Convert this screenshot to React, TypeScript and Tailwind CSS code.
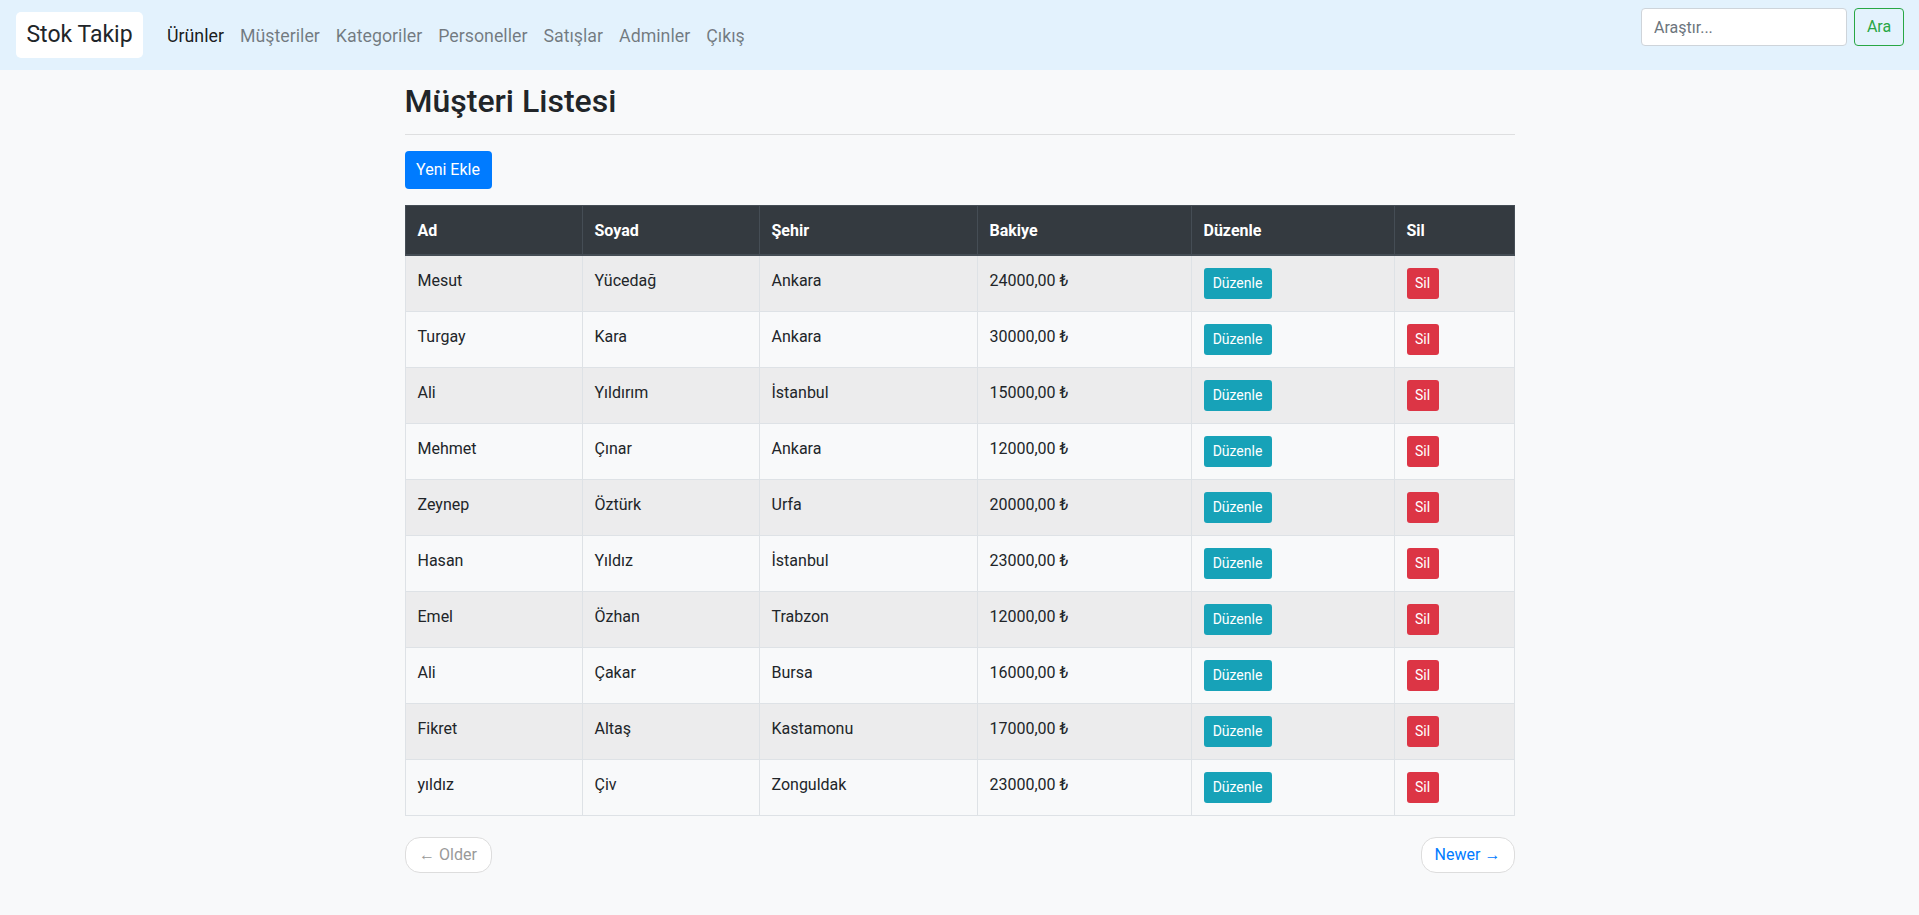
import React from "react";

interface Customer {
  ad: string;
  soyad: string;
  sehir: string;
  bakiye: string;
}

const customers: Customer[] = [
  { ad: "Mesut", soyad: "Yücedağ", sehir: "Ankara", bakiye: "24000,00 ₺" },
  { ad: "Turgay", soyad: "Kara", sehir: "Ankara", bakiye: "30000,00 ₺" },
  { ad: "Ali", soyad: "Yıldırım", sehir: "İstanbul", bakiye: "15000,00 ₺" },
  { ad: "Mehmet", soyad: "Çınar", sehir: "Ankara", bakiye: "12000,00 ₺" },
  { ad: "Zeynep", soyad: "Öztürk", sehir: "Urfa", bakiye: "20000,00 ₺" },
  { ad: "Hasan", soyad: "Yıldız", sehir: "İstanbul", bakiye: "23000,00 ₺" },
  { ad: "Emel", soyad: "Özhan", sehir: "Trabzon", bakiye: "12000,00 ₺" },
  { ad: "Ali", soyad: "Çakar", sehir: "Bursa", bakiye: "16000,00 ₺" },
  { ad: "Fikret", soyad: "Altaş", sehir: "Kastamonu", bakiye: "17000,00 ₺" },
  { ad: "yıldız", soyad: "Çiv", sehir: "Zonguldak", bakiye: "23000,00 ₺" },
];

const navLinks = ["Ürünler", "Müşteriler", "Kategoriler", "Personeller", "Satışlar", "Adminler", "Çıkış"];

const Navbar = () => (
  <nav className="flex h-[70px] items-center bg-[#e3f2fd] pl-4 pr-[15px]">
    <a className="flex h-[46px] w-[127px] items-center justify-center rounded-[5px] bg-white text-[23px] text-[#212529]">
      Stok Takip
    </a>
    <ul className="ml-4 flex items-center pt-[2px]">
      {navLinks.map((link, index) => (
        <li key={link}>
          <a
            className={
              index === 0
                ? "block px-2 text-[17.8px] leading-[26px] text-black/90"
                : "block px-2 text-[17.8px] leading-[26px] text-black/50"
            }
          >
            {link}
          </a>
        </li>
      ))}
    </ul>
    <form className="ml-auto flex gap-[7px] self-start pt-2">
      <input
        className="h-[38px] w-[206px] rounded-[4px] border border-[#ced4da] bg-white px-3 text-base text-[#495057] placeholder:text-[#6c757d]"
        placeholder="Araştır..."
      />
      <button
        className="h-[38px] w-[50px] rounded-[4px] border border-[#28a745] text-base text-[#28a745]"
        type="button"
      >
        Ara
      </button>
    </form>
  </nav>
);

const textCell = "border border-[#dee2e6] px-3 pt-[13px] pb-[11px] align-top leading-6";
const buttonCell = "border border-[#dee2e6] px-3 py-3 align-top leading-6";
const headCell = "border border-b-2 border-[#454d55] px-3 pt-[13px] pb-[11px] leading-6 font-bold";

const CustomerTable = () => (
  <table className="w-full table-fixed border-collapse text-base text-[#212529]">
    <thead>
      <tr className="bg-[#343a40] text-left text-white">
        <th className={`w-[177px] ${headCell}`}>Ad</th>
        <th className={`w-[177px] ${headCell}`}>Soyad</th>
        <th className={`w-[218px] ${headCell}`}>Şehir</th>
        <th className={`w-[214px] ${headCell}`}>Bakiye</th>
        <th className={`w-[203px] ${headCell}`}>Düzenle</th>
        <th className={headCell}>Sil</th>
      </tr>
    </thead>
    <tbody>
      {customers.map((customer, index) => (
        <tr className={index % 2 === 0 ? "bg-[#ececed]" : ""} key={`${customer.ad}-${index}`}>
          <td className={textCell}>{customer.ad}</td>
          <td className={textCell}>{customer.soyad}</td>
          <td className={textCell}>{customer.sehir}</td>
          <td className={textCell}>{customer.bakiye}</td>
          <td className={buttonCell}>
            <button
              className="block h-[31px] w-[68px] rounded-[3px] bg-[#17a2b8] text-center text-sm leading-[31px] text-white"
              type="button"
            >
              Düzenle
            </button>
          </td>
          <td className={buttonCell}>
            <button
              className="block h-[31px] w-[32px] rounded-[3px] bg-[#dc3545] text-center text-sm leading-[31px] text-white"
              type="button"
            >
              Sil
            </button>
          </td>
        </tr>
      ))}
    </tbody>
  </table>
);

export default function App() {
  return (
    <div className="min-h-screen bg-[#f8f9fa] font-['Roboto',sans-serif] text-[#212529]">
      <Navbar />
      <main className="mx-auto w-[1110px] pt-3">
        <h2 className="text-[32px] leading-[38px] font-medium">Müşteri Listesi</h2>
        <hr className="mt-[14px] mb-4 border-t border-black/10" />
        <button
          className="h-[38px] w-[87px] rounded-[4px] bg-[#007bff] text-base text-white"
          type="button"
        >
          Yeni Ekle
        </button>
        <div className="mt-4">
          <CustomerTable />
        </div>
        <div className="mt-[21px] flex justify-between">
          <a className="flex h-[36px] w-[87px] items-center justify-center rounded-[15px] border border-[#dddddd] bg-white text-base text-[#999999]">
            ← Older
          </a>
          <a className="flex h-[36px] w-[94px] items-center justify-center rounded-[15px] border border-[#dddddd] bg-white text-base text-[#007bff]">
            Newer →
          </a>
        </div>
      </main>
    </div>
  );
}
